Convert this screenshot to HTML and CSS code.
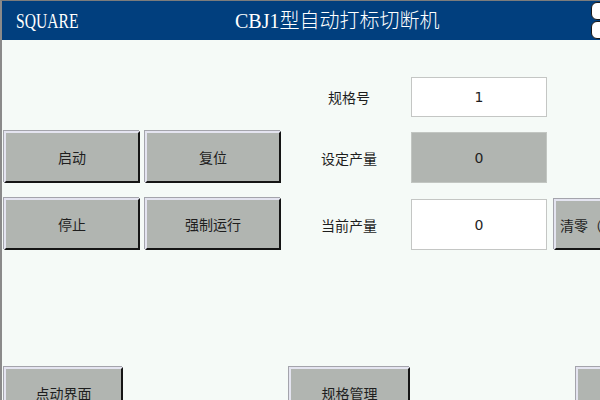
FILE: index.html
```html
<!DOCTYPE html>
<html lang="zh">
<head>
<meta charset="utf-8">
<title>CBJ1型自动打标切断机</title>
<link rel="stylesheet" href="styles.css">
</head>
<body>
<div class="screen">
  <header class="topbar">
    <span class="brand">SQUARE</span>
    <span class="title">CBJ1型自动打标切断机</span>
    <div class="corner-keys">
      <span class="key"></span>
      <span class="key"></span>
    </div>
  </header>
  <main class="workspace">
    <section class="controls">
      <button class="hmi-btn">启动</button>
      <button class="hmi-btn">复位</button>
      <button class="hmi-btn">停止</button>
      <button class="hmi-btn">强制运行</button>
    </section>
    <section class="params">
      <span class="label">规格号</span>
      <span class="field">1</span>
      <span class="spacer"></span>

      <span class="label">设定产量</span>
      <span class="field field-gray">0</span>
      <span class="spacer"></span>

      <span class="label row-current">当前产量</span>
      <span class="field row-current">0</span>
      <button class="hmi-btn clear-btn row-current">清零（</button>
    </section>
  </main>
  <nav class="footer-nav">
    <button class="hmi-btn nav-btn">点动界面</button>
    <button class="hmi-btn nav-btn nav-mid">规格管理</button>
    <button class="hmi-btn nav-btn"></button>
  </nav>
</div>
</body>
</html>
```

FILE: styles.css
```css
* { box-sizing: border-box; }

html, body {
  margin: 0;
  padding: 0;
  width: 600px;
  height: 400px;
  overflow: hidden;
  background: #f5faf7;
}

.screen {
  width: 600px;
  height: 400px;
  overflow: hidden;
  border-top: 1px solid #7c7c7c;
  border-left: 2px solid #8a8a8a;
  background: #f5faf7;
  display: flex;
  flex-direction: column;
  font-family: "Noto Sans CJK SC", "Noto Sans", sans-serif;
  color: #1e1e1e;
}

/* Header */
.topbar {
  height: 39px;
  flex: 0 0 39px;
  background: #013f7e;
  display: flex;
  align-items: center;
  padding-left: 14px;
  color: #ffffff;
  overflow: hidden;
}

.brand {
  width: 219px;
  flex: 0 0 219px;
  font-family: "Liberation Serif", "Noto Sans CJK SC", serif;
  font-size: 20px;
  line-height: 1;
  display: inline-block;
  transform: scaleX(0.78);
  transform-origin: left center;
}

.title {
  font-family: "Liberation Serif", "Noto Sans CJK SC", serif;
  font-size: 20px;
  line-height: 1;
  font-weight: 300;
}

.corner-keys {
  margin-left: auto;
  margin-right: -19px;
  width: 28px;
  align-self: stretch;
  display: flex;
  flex-direction: column;
  gap: 1px;
  padding: 1px 0 1px;
}

.key {
  flex: 1;
  background: #ffffff;
  border: 1px solid #1a1a1a;
  border-radius: 6px;
}

/* Buttons */
.hmi-btn {
  font-family: "Noto Sans CJK SC", "Noto Sans", sans-serif;
  font-size: 14px;
  color: #1e1e1e;
  background: #b1b5b1;
  border-style: solid;
  border-width: 2px;
  border-color: #e4e4f0 #151515 #151515 #e4e4f0;
  box-shadow: -1px -1px 0 #a4a4ac;
  padding: 0;
  margin: 0;
  display: flex;
  align-items: center;
  justify-content: center;
  line-height: 1;
}

/* Workspace */
.workspace {
  height: 327px;
  flex: 0 0 327px;
  display: flex;
}

.controls {
  margin-left: 2px;
  padding-top: 91px;
  display: grid;
  grid-template-columns: 136px 136px;
  grid-auto-rows: 52px;
  column-gap: 5px;
  row-gap: 15px;
  align-content: start;
}

.params {
  margin-left: 17px;
  padding-top: 37px;
  display: grid;
  grid-template-columns: 113px 143px 60px;
  grid-template-rows: 40px 51px 52px;
  row-gap: 15px;
  align-content: start;
}

.label {
  padding-right: 11px;
  font-size: 14px;
  display: flex;
  align-items: center;
  justify-content: center;
  color: #1e1e1e;
}

.field {
  width: 136px;
  background: #ffffff;
  border: 1px solid #c4c6c4;
  display: flex;
  align-items: center;
  justify-content: center;
  font-family: "DejaVu Sans", "Noto Sans", sans-serif;
  font-size: 14px;
  color: #1e1e1e;
}

.field-gray {
  background: #b1b5b1;
  border-color: #c2c6c2;
}

.row-current {
  margin-top: 1px;
}

.clear-btn {
  width: 60px;
  justify-content: flex-start;
  padding-left: 4px;
  white-space: nowrap;
  overflow: hidden;
}

/* Footer navigation */
.footer-nav {
  display: grid;
  grid-template-columns: 119px 121px 120px;
  grid-template-rows: 52px;
  column-gap: 166px;
  padding-left: 2px;
}

.nav-btn {
  height: 52px;
}
```
